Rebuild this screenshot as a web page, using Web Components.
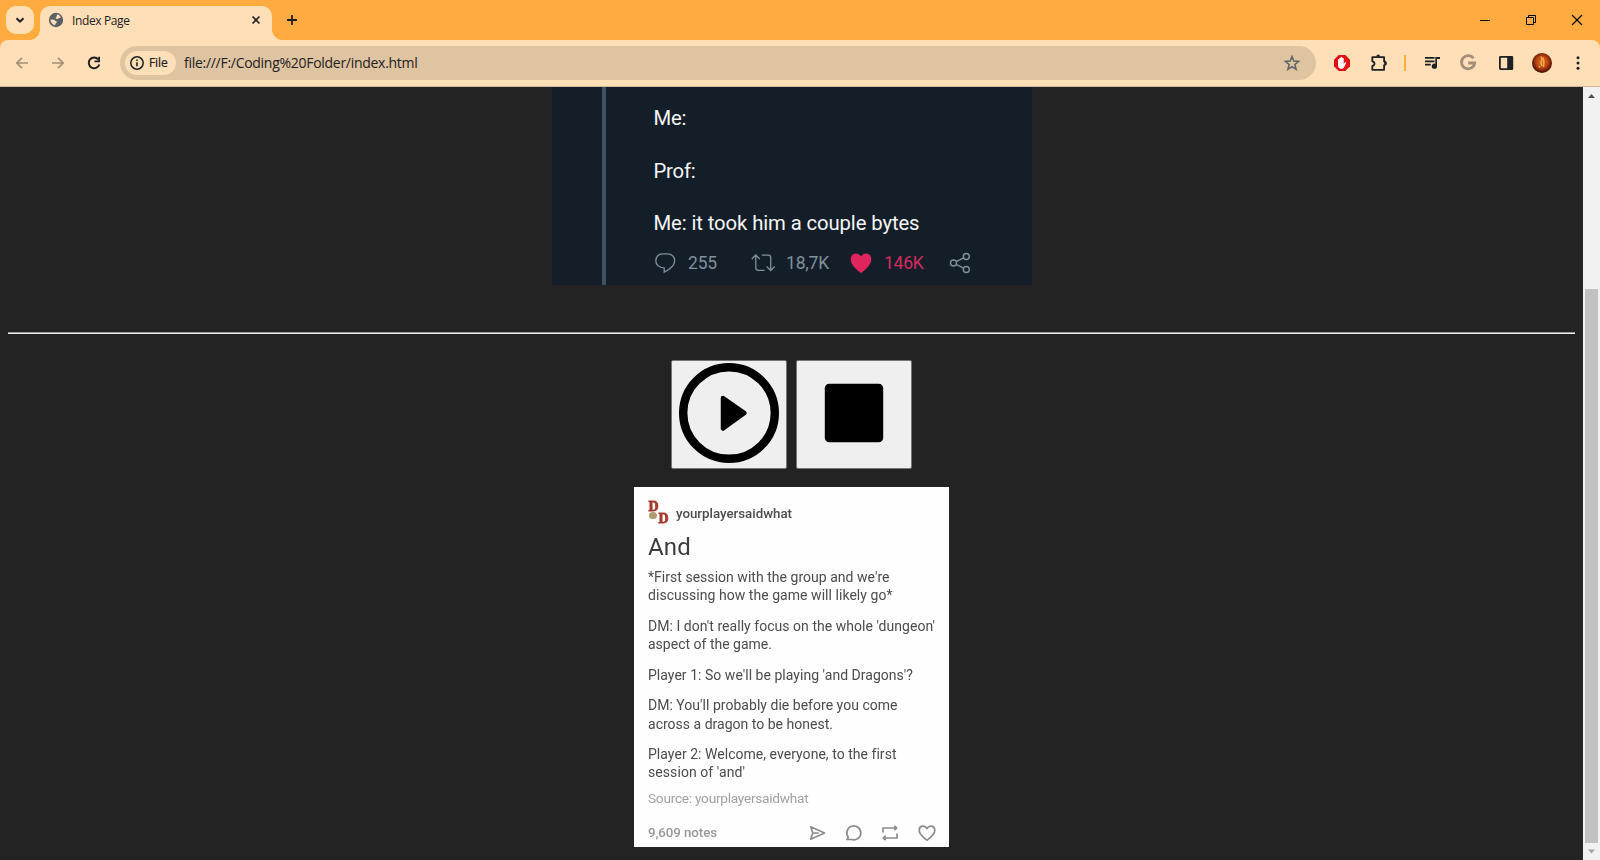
<!DOCTYPE html>
<html lang="en">
<head>
<meta charset="utf-8">
<title>Index Page</title>
<style>
html,body{margin:0;height:100%;overflow:hidden;background:#232323}
</style>
</head>
<body>
<browser-window></browser-window>
<script>
function define(name, html, setup) {
  const t = document.createElement('template');
  t.innerHTML = html;
  customElements.define(name, class extends HTMLElement {
    constructor() {
      super();
      this.attachShadow({mode: 'open'}).append(t.content.cloneNode(true));
    }
    connectedCallback() { if (setup) setup(this); }
  });
}

// One line of text, tracked so that it fills the width given in "w".
define('text-line', `
<style>:host{display:block;white-space:nowrap}span{display:inline-block;white-space:pre}</style>
<span><slot></slot></span>`, el => {
  const w = parseFloat(el.getAttribute('w'));
  if (!w) return;
  const s = el.shadowRoot.querySelector('span');
  const n = el.textContent.length;
  s.style.letterSpacing = (w - s.getBoundingClientRect().width) / n + 'px';
});

define('tab-strip', `
<style>
:host{display:flex;height:40px;background:#ffab40;padding:0 0 0 6px;box-sizing:border-box;color:#1f2023}
.drop{width:28px;height:28px;border-radius:10px;background:#ffdfb8;margin-top:6px}
.tab{position:relative;display:flex;width:232px;height:34px;margin:6px 0 0 6px;background:#ffdfb8;border-radius:10px 10px 0 0;box-sizing:border-box;padding-left:8px}
.tab:before,.tab:after{content:"";position:absolute;bottom:0;width:10px;height:10px}
.tab:before{left:-10px;background:radial-gradient(circle at 0 0,transparent 9.5px,#ffdfb8 10px)}
.tab:after{right:-10px;background:radial-gradient(circle at 100% 0,transparent 9.5px,#ffdfb8 10px)}
text-line{font:12px/16px "Open Sans","Noto Sans",sans-serif;margin:7px 0 0 8px;flex:1}
svg{display:block;flex:none}
.win{margin-left:auto;display:flex}
</style>
<svg class="drop" viewBox="0 0 28 28"><path d="M10.500 12.200l3.500 3.500 3.500-3.500" fill="none" stroke="#1f2023" stroke-width="2"/></svg>
<div class="tab">
 <svg style="margin-top:6px" width="16" height="16" viewBox="0 0 16 16"><circle cx="8" cy="8" r="7.200" fill="#5b6167"/><path d="M9.300 2.300c1.600.4 2.800 1.500 3.500 3-.8 1-2.200.6-2.700 1.400-.5.900-2.300.2-2.500-.8-.1-.8 1.200-.8 1.100-1.700-.1-.7.200-1.300.6-1.900zM2.400 7.500l3.500.2c1 .1 1.200 1.400 2.200 1.500 1.100.2 1 1.500.1 1.800-.7.300-.6 1.500-1.200 2.300-2.600-.5-4.500-2.800-4.600-5.800z" fill="#ffdfb8"/></svg>
 <text-line w="57.500">Index Page</text-line>
 <svg style="margin:6px 8px 0 0" width="16" height="16" viewBox="0 0 16 16"><path d="M4.500 4.500l7 7m0-7l-7 7" stroke="#1f2023" stroke-width="1.600"/></svg>
</div>
<svg style="margin:10px 0 0 10px" width="20" height="20" viewBox="0 0 20 20"><path d="M5 10h10M10 5v10" stroke="#1f2023" stroke-width="1.800"/></svg>
<div class="win">
 <svg width="46" height="40" viewBox="0 0 46 40"><path d="M12 20.500h10" stroke="#000"/></svg>
 <svg width="46" height="40" viewBox="0 0 46 40"><path d="M12.500 17.500h7v7h-7zM14.500 17.500v-2h7v7h-2" fill="none" stroke="#000"/></svg>
 <svg width="40" height="40" viewBox="0 0 40 40"><path d="M12 15l10 10m0-10l-10 10" stroke="#000" stroke-width="1.100"/></svg>
</div>`);

define('tool-bar', `
<style>
:host{display:block;background:linear-gradient(#ffab40,#ffab40) top/100% 10px no-repeat #ffdfb8}
.in{display:flex;align-items:center;height:46px;background:#ffdfb8;border-radius:8px 8px 0 0}
.line{height:1px;background:#cfb697}
svg{display:block;flex:none}
.bar{display:flex;align-items:center;width:1196px;height:34px;border-radius:17px;background:#dec4a0;box-sizing:border-box;padding:0 14px 0 5px;margin-left:16px}
.chip{display:flex;align-items:center;width:51px;height:24px;border-radius:12px;background:#ffdfb8;box-sizing:border-box;padding-left:4px}
text-line{font:12px/18px "Open Sans","Noto Sans",sans-serif;color:#1f2023}
.f{margin-left:4px;-webkit-text-stroke:.2px #1f2023}
.u{font-size:14px;margin:0 0 0 8px;flex:1}
</style>
<div class="in">
<svg style="margin-left:12px" width="20" height="20" viewBox="0 0 20 20"><path d="M16 10H5.500M10 4.800L4.800 10l5.200 5.200" fill="none" stroke="#a38f77" stroke-width="1.700"/></svg>
<svg style="margin-left:16px" width="20" height="20" viewBox="0 0 20 20"><path d="M4 10h10.500M10 4.800l5.200 5.200-5.200 5.200" fill="none" stroke="#a38f77" stroke-width="1.700"/></svg>
<svg style="margin-left:16px" width="20" height="20" viewBox="0 0 20 20"><path d="M14.300 6.400A5.400 5.400 0 1 0 15.300 11.500" fill="none" stroke="#1f2023" stroke-width="2"/><path d="M16 3.800v5.500h-5.500V7.500h3.700V3.800z" fill="#1f2023"/></svg>
<div class="bar">
 <div class="chip"><svg width="16" height="16" viewBox="0 0 16 16"><circle cx="8" cy="8" r="6.200" fill="none" stroke="#1f2023" stroke-width="1.500"/><path d="M8 7.200v4.100M8 4.500v1.600" stroke="#1f2023" stroke-width="1.600"/></svg><text-line class="f" w="18.500">File</text-line></div>
 <text-line class="u" w="233.500">file:///F:/Coding%20Folder/index.html</text-line>
 <svg width="20" height="20" viewBox="0 0 20 20"><path d="M10 3.600l1.800 4.500 4.800.3-3.700 3.100 1.200 4.800-4.100-2.600-4.100 2.600 1.200-4.800-3.700-3.100 4.800-.3z" fill="none" stroke="#5f6368" stroke-width="1.500"/></svg>
</div>
<svg style="margin-left:17px" width="18" height="18" viewBox="0 0 18 18"><path d="M5.700 1h6.600L17 5.700v6.600L12.300 17H5.700L1 12.300V5.700z" fill="#e50b12"/><path d="M5 8.300V5.700c0-.9 1.300-.9 1.300 0V4.300c0-.9 1.400-.9 1.400 0v-.7c0-1 1.500-1 1.500 0v.8c0-.9 1.500-.9 1.500 0V10l1.200-1.600c.7-.5 1.500.1 1.200.8l-1.900 3.900c-.6 1.200-1.500 1.800-3 1.800C6 14.900 5 13.500 5 11.600z" fill="#fff"/></svg>
<svg style="margin-left:18px" width="20" height="20" viewBox="0 0 20 20"><path d="M3.300 4.200h11.800v4.300c2.300 0 2.300 3.600 0 3.600v4.700H3.300v-3.900c2.900-.3 2.900-4.300 0-4.600z" fill="none" stroke="#1f2023" stroke-width="1.800" stroke-linejoin="round"/><path d="M7.400 3.800c0-3.200 3.600-3.200 3.600 0zM15.300 8.400c2.900 0 2.900 3.800 0 3.800z" fill="#1f2023"/></svg>
<svg style="margin-left:15px" width="2" height="16"><path d="M1 0v16" stroke="#ffab40" stroke-width="2"/></svg>
<svg style="margin-left:17px" width="20" height="20" viewBox="0 0 20 20"><path d="M2 4.900h9.500M2 8.300h9.500M2 11.700h5.800" stroke="#1f2023" stroke-width="1.700"/><path d="M12.300 4h4.700v2h-3v7.200a2.600 2.600 0 1 1-1.700-2.400z" fill="#1f2023"/></svg>
<svg style="margin-left:15px" width="20" height="20" viewBox="0 0 20 20"><path d="M15.500 5.300A6.600 6.600 0 1 0 16.700 10H10.200" fill="none" stroke="#a38f77" stroke-width="2.800"/></svg>
<svg style="margin-left:18px" width="20" height="20" viewBox="0 0 20 20"><rect x="3.900" y="3.900" width="12.400" height="12.200" rx=".5" fill="none" stroke="#1f2023" stroke-width="1.800"/><path d="M11.200 3.500H17v13h-5.800z" fill="#1f2023"/></svg>
<svg style="margin-left:16px" width="20" height="20" viewBox="0 0 20 20"><defs><radialGradient id="g" cy=".45"><stop offset="0" stop-color="#e0701f"/><stop offset=".6" stop-color="#b8430f"/><stop offset="1" stop-color="#551408"/></radialGradient></defs><circle cx="10" cy="10" r="10" fill="url(#g)"/><path d="M9 3.500l1 3-1.300 3 1.300 3.500M11 4.500l.9 4-.4 5.500M8 13l-1 1.500" fill="none" stroke="#f6b858" stroke-width="1.500" opacity=".85"/></svg>
<svg style="margin-left:16px" width="20" height="20" viewBox="0 0 20 20" fill="#1f2023"><circle cx="10" cy="4.800" r="1.500"/><circle cx="10" cy="10" r="1.500"/><circle cx="10" cy="15.200" r="1.500"/></svg>
</div><div class="line"></div>`);

define('tweet-image', `
<style>
:host{display:flex;width:480px;height:198px;background:#141e29;box-sizing:border-box;padding-left:50px;margin:0 auto}
.rail{width:4px;background:#3e5361}
.body{padding:18px 0 0 48px;font-family:Roboto,sans-serif}
.body>text-line{font-size:20.300px;line-height:26px;height:52.600px;color:#f5f5f5}
.row{display:flex;align-items:center;margin-top:-12.800px;height:26px;font-size:17.500px;line-height:20px;color:#80909c}
svg{display:block;flex:none}
</style>
<div class="rail"></div>
<div class="body">
<text-line w="32.500">Me:</text-line><text-line w="42">Prof:</text-line><text-line w="266">Me: it took him a couple bytes</text-line>
<div class="row">
<svg width="22" height="22" viewBox="0 0 22 22"><path d="M8.300 1.800h5.400c3.800 0 7 2.800 7 6.800 0 5-4.500 8.700-10.500 11.500v-4.300c-5.100 0-8.400-3-8.400-7 0-4 2.900-7 6.500-7z" fill="none" stroke="#80909c" stroke-width="1.300"/></svg>
<text-line style="margin-left:12.500px" w="29">255</text-line>
<svg style="margin-left:32.500px" width="26" height="22" viewBox="0 0 26 22"><path d="M1.800 7l4-4 4 4M5.800 3.500v12.300c0 1.800.8 2.600 2.600 2.600h6.200M11.800 3.200h6.700c1.500 0 2.200.8 2.200 2.300v12.600M16.700 14.500l4 4 4-4" fill="none" stroke="#80909c" stroke-width="1.300"/></svg>
<text-line style="margin-left:10.500px" w="43">18,7K</text-line>
<svg style="margin-left:21px" width="22" height="22" viewBox="0 0 22 22"><path d="M11 21C8.500 19.500.7 13.500.7 7.300.7 3.500 3 1.500 5.800 1.500c2.300 0 4.200 1.200 5.200 3 1-1.800 2.900-3 5.200-3 2.800 0 5.100 2 5.100 5.800C21.300 13.500 13.500 19.500 11 21z" fill="#e0245e"/></svg>
<text-line style="margin-left:12px;color:#d42a5e" w="39.500">146K</text-line>
<svg style="margin-left:25px" width="22" height="22" viewBox="0 0 22 22"><g fill="none" stroke="#80909c" stroke-width="1.400"><circle cx="4.500" cy="11" r="3"/><circle cx="17.300" cy="4.500" r="3"/><circle cx="17.300" cy="17.500" r="3"/><path d="M7.200 9.600l7.400-3.800M7.200 12.400l7.400 3.800"/></g></svg>
</div></div>`);

define('media-button', `
<style>:host{display:block;width:116px;height:109px;box-sizing:border-box;border:1px solid #767676;border-radius:2px;background:#efefef}
::slotted(svg){display:block;margin:2px auto 0}</style><slot></slot>`);

define('post-image', `
<style>
:host{display:block;width:315px;height:360px;box-sizing:border-box;padding:13px 14px 0;background:#fefefe;margin:18px auto 0;font-family:Roboto,sans-serif;color:#4c4c4c}
.soft{filter:blur(.4px)}
.head{display:flex;height:26px}
.head text-line{font-size:13.300px;line-height:18px;font-weight:500;margin:5px 0 0 7px}
h1{margin:8px 0 0;font-weight:400;font-size:24px;line-height:27px;color:#3c3c3c}
p{margin:0 0 12.200px;font-size:14px;line-height:18.300px}
h1+p{margin-top:7.200px}
.src{font-size:13.700px;line-height:18px;color:#a2a2a2;margin-top:-5px}
.foot{display:flex;margin-top:16.500px;align-items:center;height:20px;font-size:13.300px;line-height:18px;color:#999;font-weight:500}
.foot svg{display:block;flex:none;fill:none;stroke:#8c8c8c;stroke-width:1.700;stroke-linejoin:round}
.logo{width:21px;height:23px;font:bold 14px/12px "Liberation Serif",serif;color:#a5392e;position:relative}
.logo b{position:absolute;-webkit-text-stroke:.8px #a5392e}
.logo i{position:absolute;left:1px;top:12px;width:8px;height:7px;border-radius:50%;background:#b09a72}
</style>
<div class="soft">
<div class="head"><div class="logo"><i></i><b style="left:.5px;top:1px">D</b><b style="left:10.600px;top:12.500px">D</b></div><text-line w="116">yourplayersaidwhat</text-line></div>
<h1><text-line w="43">And</text-line></h1>
<p><text-line w="241.500">*First session with the group and we're</text-line><text-line w="244.500">discussing how the game will likely go*</text-line></p>
<p><text-line w="287">DM: I don't really focus on the whole 'dungeon'</text-line><text-line w="124">aspect of the game.</text-line></p>
<p><text-line w="265">Player 1: So we'll be playing 'and Dragons'?</text-line></p>
<p><text-line w="249.500">DM: You'll probably die before you come</text-line><text-line w="185">across a dragon to be honest.</text-line></p>
<p><text-line w="248">Player 2: Welcome, everyone, to the first</text-line><text-line w="97">session of 'and'</text-line></p>
<text-line class="src" w="160.500">Source: yourplayersaidwhat</text-line>
<div class="foot"><text-line w="69">9,609 notes</text-line>
<svg style="margin-left:91px" width="20" height="20" viewBox="0 0 20 20"><path d="M2.700 3.800L16.500 10 2.700 16.200 4.800 10zM4.800 10h6"/></svg>
<svg style="margin-left:16px" width="20" height="20" viewBox="0 0 20 20"><path d="M3 16.500l1.300-2.300A7 7 0 1 1 7.500 16.500z"/></svg>
<svg style="margin-left:16px" width="20" height="20" viewBox="0 0 20 20"><path d="M3 9.500V5h13.500M14.300 2.800L16.700 5l-2.400 2.200M17 10.500V15H3.500M5.700 12.800L3.300 15l2.400 2.200"/></svg>
<svg style="margin-left:17px" width="20" height="20" viewBox="0 0 20 20"><path d="M10 17.200C7.500 15.300 2.200 11.600 2.200 7.300c0-4.800 5.700-5.600 7.800-1.700 2.100-3.900 7.800-3.100 7.800 1.700 0 4.300-5.300 8-7.800 9.900z"/></svg>
</div></div>`);

define('scroll-bar', `
<style>:host{display:flex;flex-direction:column;align-items:center;width:17px;background:#f1f1f1}
svg{display:block;flex:none}.track{height:185px}.thumb{width:13px;height:554px;background:#c1c1c1}</style>
<svg width="17" height="17"><path d="M5 11h7L8.500 7z" fill="#505050"/></svg><div class="track"></div><div class="thumb"></div>
<svg width="17" height="17"><path d="M5 6.500h7l-3.500 4z" fill="#a3a3a3"/></svg>`);

define('page-view', `
<style>
:host{display:block;flex:1;background:#232323}
hr{height:0;border:0;border-top:1px solid #9a9a9a;border-bottom:1px solid #eee;margin:47px 8px 26px}
.buttons{display:flex;gap:9px;justify-content:center}
</style>
<tweet-image></tweet-image>
<hr>
<div class="buttons">
<media-button><svg width="100" height="100" viewBox="0 0 100 100"><circle cx="50" cy="50" r="45.800" fill="none" stroke="#000" stroke-width="8.400"/><path d="M44 35l21.500 15L44 65.500z" stroke="#000" stroke-width="4.500" stroke-linejoin="round"/></svg></media-button>
<media-button><svg width="100" height="100" viewBox="0 0 100 100"><rect x="20.800" y="20.800" width="58.400" height="58.400" rx="4.500"/></svg></media-button>
</div>
<post-image></post-image>`);

define('browser-window', `
<style>:host{display:flex;flex-direction:column;width:1600px;height:860px;overflow:hidden}main{display:flex;flex:1;min-height:0}</style>
<tab-strip></tab-strip><tool-bar></tool-bar><main><page-view></page-view><scroll-bar></scroll-bar></main>`);
</script>
</body>
</html>
